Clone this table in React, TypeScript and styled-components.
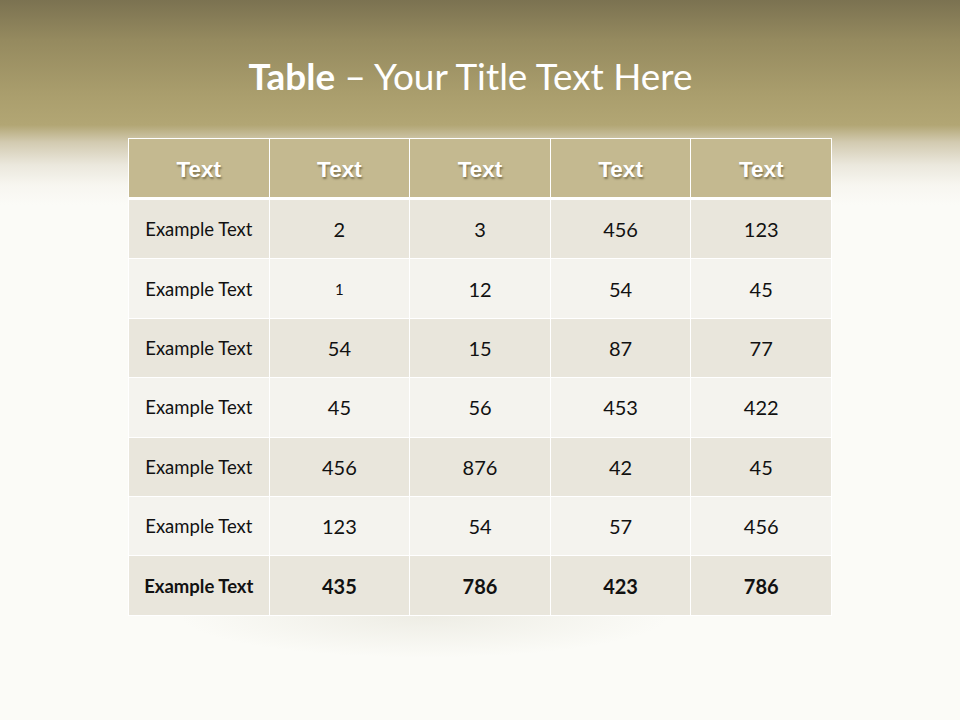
import React from "react";
import styled, { createGlobalStyle } from "styled-components";

const Global = createGlobalStyle`
  html, body { margin: 0; padding: 0; }
  body {
    width: 960px;
    height: 720px;
    overflow: hidden;
    background: #fbfbf7;
  }
`;

const Slide = styled.div`
  width: 960px;
  height: 720px;
  box-sizing: border-box;
  background: linear-gradient(
    to bottom,
    #7b7251 0px,
    #958a5f 40px,
    #aa9e6d 95px,
    #b2a674 125px,
    #d2cab0 142px,
    #ebe8dd 165px,
    #f7f6f0 185px,
    #fbfbf7 205px,
    #fbfbf7 100%
  );
  display: flex;
  flex-direction: column;
  align-items: center;
  padding-top: 52px;
  font-family: Lato, "Open Sans", sans-serif;
`;

const Title = styled.h1`
  margin: 0 19px 0 0;
  height: 48px;
  line-height: 48px;
  font-size: 36.9px;
  font-weight: 400;
  color: #ffffff;
  b { font-weight: 700; }
`;

const TableWrap = styled.div`
  margin-top: 38px;
  position: relative;
  &::after {
    content: "";
    position: absolute;
    left: 50px;
    right: 160px;
    bottom: -42px;
    height: 42px;
    background: radial-gradient(ellipse at 50% 0%, rgba(185, 180, 155, 0.2), rgba(185, 180, 155, 0) 70%);
    pointer-events: none;
  }
`;

const Grid = styled.table`
  border-collapse: collapse;
  table-layout: fixed;
  width: 704px;
`;

const HeadCell = styled.th`
  height: 60px;
  padding: 4px 0 0;
  box-sizing: border-box;
  background: #c4b990;
  border: 1px solid #ffffff;
  border-bottom: 3px solid #ffffff;
  color: #ffffff;
  font-family: "Liberation Sans", Arial, sans-serif;
  font-weight: 700;
  font-size: 22.5px;
  text-align: center;
  text-shadow: 1px 2px 2px rgba(70, 60, 30, 0.55);
`;

const Row = styled.tr<{ $odd: boolean }>`
  background: ${(p) => (p.$odd ? "#e9e6dc" : "#f4f3ee")};
`;

const Cell = styled.td<{ $label?: boolean; $bold?: boolean; $small?: boolean }>`
  height: 58.4px;
  padding: 0;
  border: 1px solid #ffffff;
  text-align: center;
  color: #111111;
  font-family: Lato, "Open Sans", sans-serif;
  font-size: ${(p) => (p.$label ? "18.5px" : p.$small ? "15px" : "20px")};
  font-weight: ${(p) => (p.$bold ? 700 : 400)};
`;

const header = ["Text", "Text", "Text", "Text", "Text"];
const rows: string[][] = [
  ["2", "3", "456", "123"],
  ["1", "12", "54", "45"],
  ["54", "15", "87", "77"],
  ["45", "56", "453", "422"],
  ["456", "876", "42", "45"],
  ["123", "54", "57", "456"],
  ["435", "786", "423", "786"],
];

export default function App() {
  return (
    <>
      <Global />
      <Slide>
        <Title>
          <b>Table</b> – Your Title Text Here
        </Title>
        <TableWrap>
          <Grid>
            <thead>
              <tr>
                {header.map((h, i) => (
                  <HeadCell key={i}>{h}</HeadCell>
                ))}
              </tr>
            </thead>
            <tbody>
              {rows.map((r, i) => {
                const last = i === rows.length - 1;
                return (
                  <Row key={i} $odd={i % 2 === 0}>
                    <Cell $label $bold={last}>Example Text</Cell>
                    {r.map((v, j) => (
                      <Cell key={j} $bold={last} $small={i === 1 && j === 0}>
                        {v}
                      </Cell>
                    ))}
                  </Row>
                );
              })}
            </tbody>
          </Grid>
        </TableWrap>
      </Slide>
    </>
  );
}
